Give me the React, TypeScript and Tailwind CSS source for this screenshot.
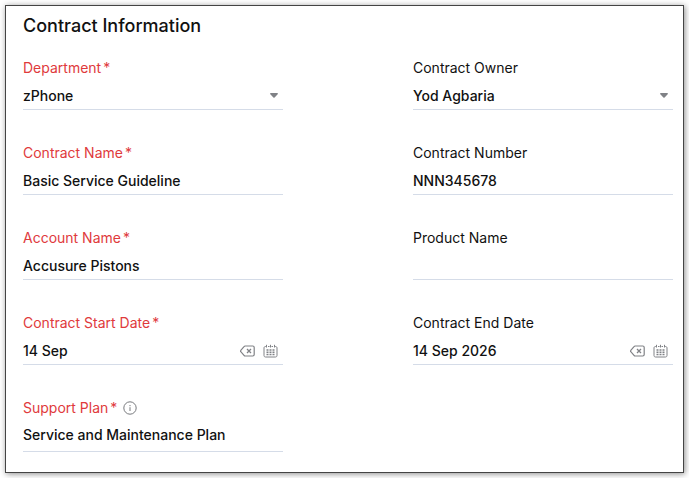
import { useState } from "react";
import type { ReactNode } from "react";

interface FieldProps {
  id: string;
  label: string;
  required?: boolean;
  tall?: boolean;
  hint?: ReactNode;
  children: ReactNode;
}

function Field({ id, label, required, tall, hint, children }: FieldProps) {
  return (
    <div className={tall ? "min-w-0" : "min-w-0 space-y-1"}>
      <div className="flex h-5 items-center gap-1.5">
        <label
          htmlFor={id}
          className={`flex gap-0.5 text-sm leading-5 ${required ? "text-[#e03a3c]" : "text-[#111111]"}`}
        >
          {label}
          {required && <span>*</span>}
        </label>
        {hint}
      </div>
      <div
        className={`flex items-center border-b border-[#d5dce8] pr-[5px] ${tall ? "h-[34px]" : "h-7"}`}
      >
        {children}
      </div>
    </div>
  );
}

const controlClass =
  "min-w-0 flex-1 appearance-none bg-transparent p-0 text-sm leading-5 font-medium text-[#111111] outline-none";

function TextField({ id, label, value, required, tall, hint }: Omit<FieldProps, "children"> & { value: string }) {
  return (
    <Field id={id} label={label} required={required} tall={tall} hint={hint}>
      <input id={id} type="text" defaultValue={value} className={controlClass} />
    </Field>
  );
}

function SelectField({ id, label, value, required }: { id: string; label: string; value: string; required?: boolean }) {
  return (
    <Field id={id} label={label} required={required}>
      <select id={id} defaultValue={value} className={controlClass}>
        <option>{value}</option>
      </select>
      <svg className="pointer-events-none h-[5px] w-2" viewBox="0 0 8 5" fill="#808286" aria-hidden="true">
        <path d="M.8 0h6.4c.7 0 1 .7.5 1.2L4.6 4.5a.8.8 0 0 1-1.2 0L.3 1.2C-.2.7.1 0 .8 0Z" />
      </svg>
    </Field>
  );
}

function DateField({ id, label, value, required }: { id: string; label: string; value: string; required?: boolean }) {
  const [date, setDate] = useState(value);

  return (
    <Field id={id} label={label} required={required}>
      <input
        id={id}
        type="text"
        value={date}
        onChange={(e) => setDate(e.target.value)}
        className={controlClass}
      />
      <div className="flex items-center gap-2">
        <button type="button" aria-label={`Clear ${label}`} onClick={() => setDate("")}>
          <svg className="h-3.5 w-[15px]" viewBox="0 0 15 14" fill="none" stroke="#808286" aria-hidden="true">
            <path d="M5.2 2h7.6c.8 0 1.4.6 1.4 1.4v7.2c0 .8-.6 1.4-1.4 1.4H5.2c-.5 0-.9-.2-1.2-.6L.8 7.7a1 1 0 0 1 0-1.4L4 2.6c.3-.4.7-.6 1.2-.6Z" strokeWidth="1.2" />
            <path d="m7 5 4 4m0-4-4 4" strokeWidth="1.3" />
          </svg>
        </button>
        <button type="button" aria-label={`Pick ${label}`}>
          <svg className="h-3.5 w-[15px]" viewBox="0 0 15 14" fill="none" stroke="#808286" aria-hidden="true">
            <path d="M3.5 2.5h-1c-.9 0-1.5.6-1.5 1.5v7.5c0 .9.6 1.500 1.500 1.500h10c.9 0 1.500-.6 1.500-1.500V4c0-.9-.6-1.500-1.500-1.500h-1M5 2.500h1.500m2 0H10" />
            <path d="M3.500.8v2.700M7.500.8v2.700M11.500.8v2.700" />
            <path d="M3.500 6h2m1 0h2m1 0h2M3.500 8.200h2m1 0h2m1 0h2M3.500 10.400h2m1 0h2m1 0h2" strokeWidth="1.500" />
          </svg>
        </button>
      </div>
    </Field>
  );
}

function InfoIcon() {
  return (
    <svg className="h-3.5 w-3.5" viewBox="0 0 14 14" fill="none" stroke="#77797d" aria-hidden="true">
      <circle cx="7" cy="7" r="6.2" />
      <path d="M7 6.2V10" />
      <path d="M7 4v1.2" />
    </svg>
  );
}

export default function App() {
  return (
    <main
      className="bg-white p-[5px]"
      style={{ fontFamily: 'Inter, "Liberation Sans", sans-serif' }}
    >
      <form className="border border-[#444444] bg-white pt-2 pr-2.5 pb-5 pl-[17px] shadow-[1px_1px_6px_rgba(0,0,0,0.45)]">
        <h1 className="mb-5 text-lg leading-6 font-medium text-[#111111]">Contract Information</h1>

        <div className="grid grid-cols-2 gap-x-[130px] gap-y-[33px]">
          <SelectField id="department" label="Department" value="zPhone" required />
          <SelectField id="owner" label="Contract Owner" value="Yod Agbaria" />
          <TextField id="name" label="Contract Name" value="Basic Service Guideline" required />
          <TextField id="number" label="Contract Number" value="NNN345678" />
          <TextField id="account" label="Account Name" value="Accusure Pistons" required />
          <TextField id="product" label="Product Name" value="" />
          <DateField id="start" label="Contract Start Date" value="14 Sep" required />
          <DateField id="end" label="Contract End Date" value="14 Sep 2026" />
          <TextField
            id="plan"
            label="Support Plan"
            value="Service and Maintenance Plan"
            required
            tall
            hint={<InfoIcon />}
          />
        </div>
      </form>
    </main>
  );
}
